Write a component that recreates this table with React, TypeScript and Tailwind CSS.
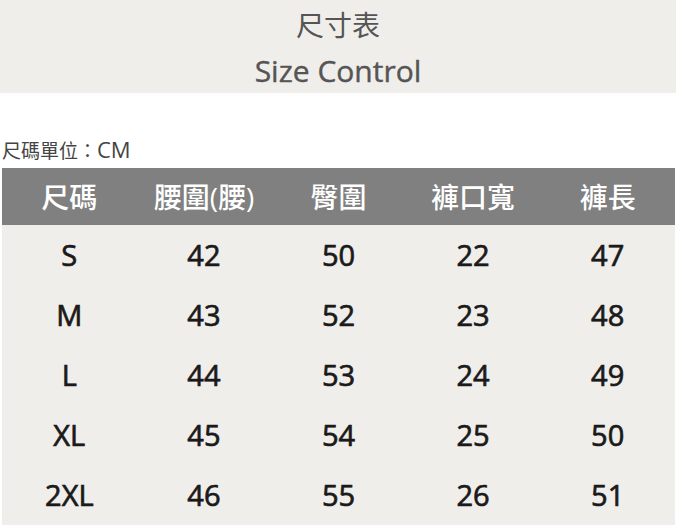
const FONT = "font-['Open_Sans','Noto_Sans_CJK_TC',sans-serif]";

const HEAD = ["尺碼", "腰圍(腰)", "臀圍", "褲口寬", "褲長"];

const ROWS = [
  ["S", "42", "50", "22", "47"],
  ["M", "43", "52", "23", "48"],
  ["L", "44", "53", "24", "49"],
  ["XL", "45", "54", "25", "50"],
  ["2XL", "46", "55", "26", "51"],
];

export default function App() {
  return (
    <div className={`${FONT} h-[527px] w-[680px] bg-white`}>
      <div className="flex h-[93px] w-[676px] flex-col items-center bg-[#f0eeea] text-[#555]">
        <div className="mt-[5px] text-[28px] leading-[40px]">尺寸表</div>
        <div className="mt-[6px] text-[30px] leading-[40px] [-webkit-text-stroke:0.4px_#555]">
          Size Control
        </div>
      </div>
      <div className="mt-[44px] h-[24px] pl-[2px] text-[19px] leading-[24px] text-[#444]">
        尺碼單位：<span className="text-[22px] leading-[24px]">CM</span>
      </div>
      <div className="ml-[2px] mt-[7px] w-[673px] bg-[#f0eeea]">
        <div className="grid h-[57px] grid-cols-5 items-center bg-[#808080] text-[28px] font-medium text-white">
          {HEAD.map((h) => (
            <div key={h} className="text-center">
              {h}
            </div>
          ))}
        </div>
        {ROWS.map((r) => (
          <div
            key={r[0]}
            className="grid h-[60px] grid-cols-5 items-center text-[29px] text-[#1a1a1a] [-webkit-text-stroke:0.7px_#1a1a1a]"
          >
            {r.map((c, i) => (
              <div key={i} className="text-center">
                {c}
              </div>
            ))}
          </div>
        ))}
      </div>
    </div>
  );
}
